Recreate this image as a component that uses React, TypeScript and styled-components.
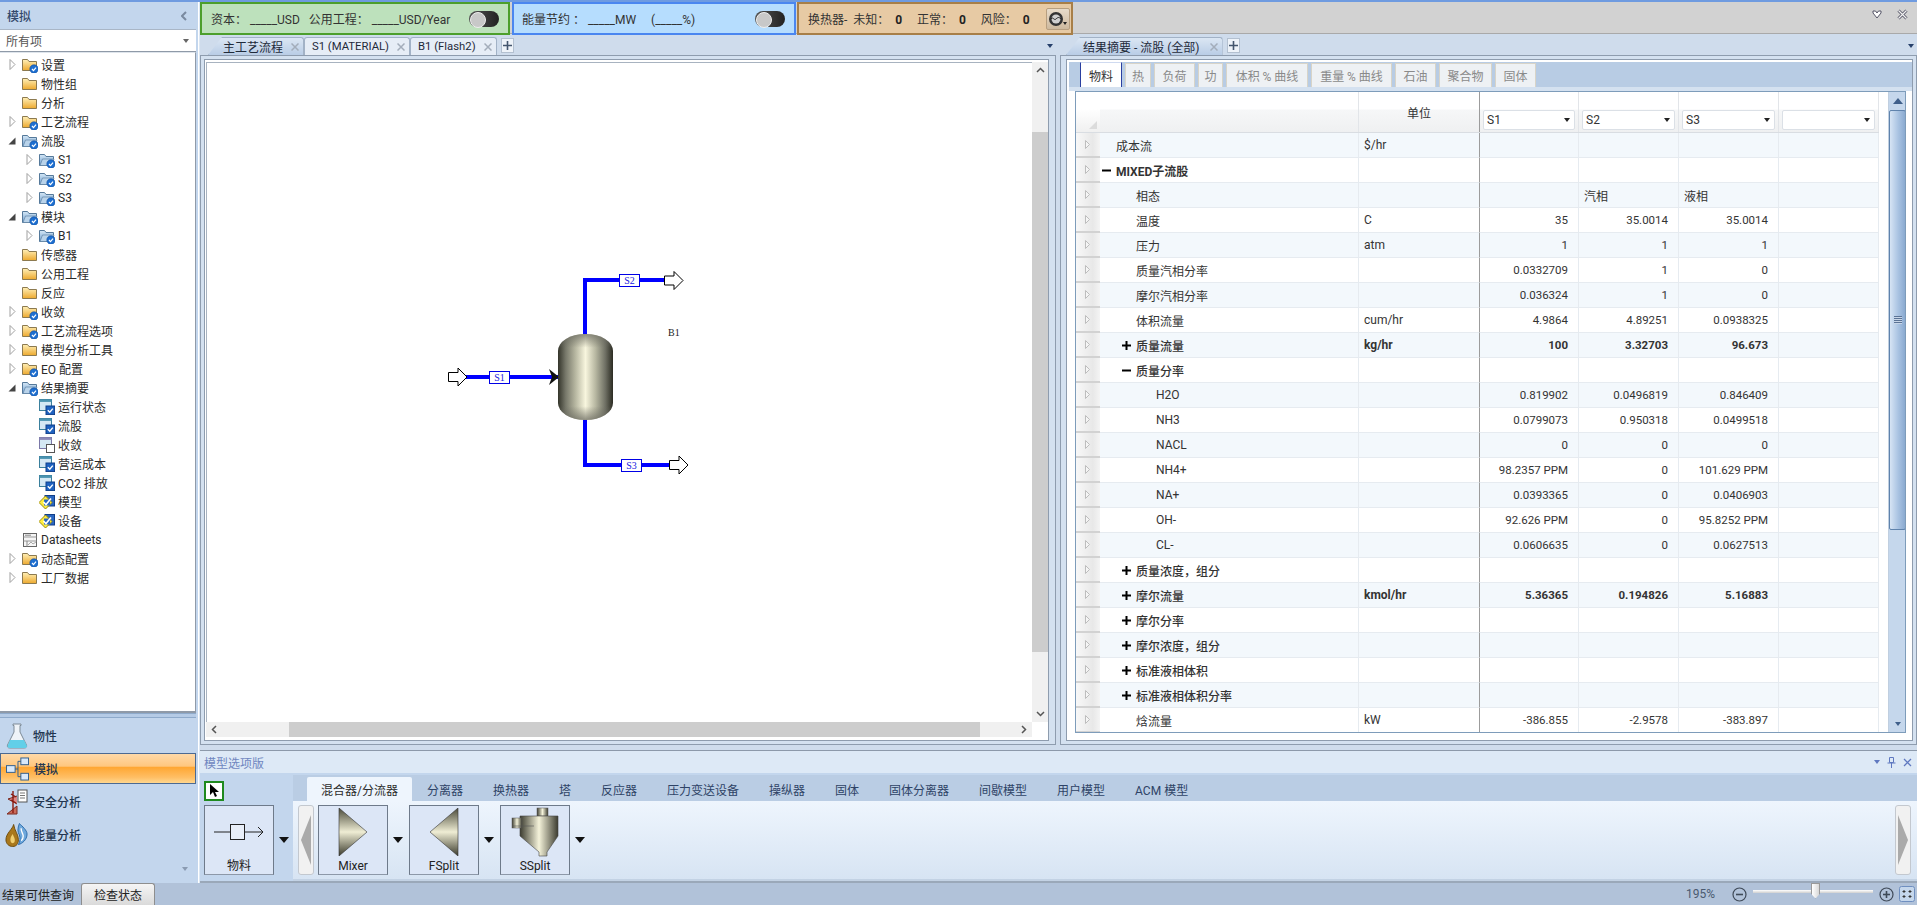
import React from "react";
import styled, { createGlobalStyle } from "styled-components";

const Global = createGlobalStyle`
  html, body { margin: 0; padding: 0; height: 100%; overflow: hidden; }
  body { font-family: Roboto, "Noto Sans CJK SC", "Noto Sans", sans-serif; font-size: 12px; color: #1c1c1c; }
  * { box-sizing: border-box; }
`;

const Page = styled.div`
  width: 1917px; height: 905px; display: flex; flex-direction: column;
  background: #c4d6ec; border-top: 2px solid #6f9be0;
`;
const Body = styled.div`display: flex; flex: 1; min-height: 0;`;

/* ---------- sidebar ---------- */
const Sidebar = styled.div`
  width: 196px; flex: none; display: flex; flex-direction: column; background: #c3d6ed;
`;
const Gutter = styled.div`width: 4px; flex: none; background: linear-gradient(90deg,#c3d6ed 0 2px,#fff 2px 3px,#dde8f4 3px);`;
const SideHead = styled.div`
  height: 27px; display: flex; align-items: center; justify-content: space-between;
  padding: 0 9px 0 7px; font-size: 12px; color: #33496b; font-weight: 500;
`;
const Combo = styled.div`
  height: 23px; background: #fff; border-top: 1px solid #a9b6c6; border-bottom: 1px solid #8f9aa8;
  display: flex; align-items: center; justify-content: space-between; padding: 0 7px 0 6px; color: #555;
`;
const TinyDown = styled.span`
  width: 0; height: 0; border-left: 3px solid transparent; border-right: 3px solid transparent;
  border-top: 4px solid ${p => p.$c || "#666"}; display: inline-block; flex: none;
`;
const Tree = styled.div`
  height: 661px; background: #fff; padding-top: 2px; border-right: 1px solid #8f9aa8;
  border-bottom: 2px solid #8f9aa8; border-top: 1px solid #dfe5ec;
`;
const TreeRow = styled.div`
  height: 19px; display: flex; align-items: center; white-space: nowrap; padding-left: ${p => p.$level * 17 + 6}px; color: #2a2a2a;
`;
const Exp = styled.span`width: 16px; height: 19px; display: inline-flex; align-items: center; justify-content: flex-start; flex: none;`;
const NodeIcon = styled.span`width: 19px; height: 19px; display: inline-flex; align-items: center; flex: none;`;
const NavBand = styled.div`height: 5px; background: #b5cbe6; border-bottom: 1px solid #8eaacb; border-top: 1px solid #8eaacb;`;
const Nav = styled.div`flex: 1; display: flex; flex-direction: column; padding-top: 1px; position: relative;`;
const NavItem = styled.div`
  height: 33px; display: flex; align-items: center; gap: 5px; padding-left: 5px; font-weight: 500; color: #22354f;
  ${p => p.$on ? `height: 31px; margin: 1px 0 1px 0; border: 1px solid #4c6a92;
    background: linear-gradient(180deg,#ffd9a8 0%,#ffc77f 42%,#ffa733 46%,#ffbe64 80%,#ffd78f 100%);` : ""}
`;
const NavIcon = styled.span`width: 23px; height: 26px; display: inline-flex; align-items: center; justify-content: center; flex: none;`;
const NavMore = styled.div`position: absolute; right: 8px; bottom: 12px; line-height: 0;`;

/* ---------- workspace ---------- */
const Workspace = styled.div`flex: 1; min-width: 0; display: flex; flex-direction: column; background: #cfdcec;`;
const Ribbon = styled.div`height: 34px; flex: none; display: flex; background: linear-gradient(180deg,#d2d2d2 0 31px,#a9a9a9 31px 32px,#cfdcec 32px); position: relative;`;
const Badge = styled.div`
  height: 33px; width: ${p => p.$w}px; margin-right: ${p => p.$mr}px; flex: none; display: flex; align-items: center; justify-content: space-between;
  padding: 0 ${p => p.$pr}px 0 ${p => p.$pl}px; background: ${p => p.$bg}; border: 2px solid ${p => p.$bc}; white-space: nowrap; color: #333;
`;
const BadgeText = styled.span`white-space: pre;`;
const Strong = styled.b`font-weight: 700; color: #222;`;
const Toggle = styled.span`
  width: 30px; height: 16px; border-radius: 8px; background: linear-gradient(90deg,#555,#222); display: inline-block; position: relative; flex: none;
  &::after { content: ""; position: absolute; left: 1px; top: 1px; width: 14px; height: 14px; border-radius: 50%; background: #c8c8c8; border: 1px solid #eee; }
`;
const EyeBtn = styled.span`
  width: 24px; height: 22px; background: linear-gradient(180deg,#e8dccb,#cdb99e); border: 1px solid #b79f80; border-radius: 2px;
  display: inline-flex; align-items: center; justify-content: center; flex: none;
`;
const WinBtns = styled.div`position: absolute; right: 9px; top: 7px; display: flex; gap: 15px; align-items: center; line-height: 0;`;

const Docs = styled.div`flex: 1; min-height: 0; display: flex; gap: 4px;`;
const DocPanel = styled.div`width: ${p => p.$w}px; flex: none; display: flex; flex-direction: column; min-height: 0;`;
const TabStrip = styled.div`
  height: 19px; flex: none; display: flex; align-items: flex-end; padding-left: ${p => p.$pl}px; position: relative;
`;
const DocTab = styled.div`
  height: 18px; display: flex; align-items: center; gap: ${p => p.$gap || 8}px; white-space: nowrap; color: #1f2a3a; flex: none;
  padding: 0 4px 0 ${p => p.$pl}px; font-size: ${p => p.$fs || 12}px;
  background: ${p => p.$on ? "linear-gradient(180deg,#dbe6f3,#b9cde6)" : "#e6edf6"};
  border: 1px solid #a2b2c6; border-bottom: 0; border-radius: 3px 3px 0 0;
  clip-path: ${p => p.$slant ? "polygon(14px 0,100% 0,100% 100%,0 100%)" : "none"};
`;
const PlusBtn = styled.span`
  width: 13px; height: 15px; margin: 0 0 2px 4px; background: #eef3f9; border: 1px solid #b3c0d0; display: inline-flex; align-items: center; justify-content: center; flex: none;
`;
const StripArrow = styled.span`position: absolute; right: 3px; top: 8px; line-height: 0;`;
const Outer = styled.div`
  flex: 1; min-height: 0; display: flex; border: 1px solid #8e9cae; padding: ${p => p.$pad}; margin-bottom: 5px; background: #d4e1f0;
`;
const Inner = styled.div`
  flex: 1; min-width: 0; display: flex; flex-direction: column; background: #fff; border: 1px solid #8e9cae; padding: ${p => p.$pad};
`;
const CanvasWrap = styled.div`flex: 1; min-height: 0; display: grid; grid-template-columns: 1fr 16px; grid-template-rows: 1fr 15px;`;
const Canvas = styled.div`background: #fff; overflow: hidden; min-height: 0; border-top: 1px solid #a8b3c0; border-left: 1px solid #a8b3c0;`;
const VScroll = styled.div`display: flex; flex-direction: column; background: #f0f0f0;`;
const ScrollEnd = styled.div`height: 16px; flex: none; display: flex; align-items: center; justify-content: center; color: #555; line-height: 0;`;
const ScrollThumb = styled.div`flex: ${p => p.$f}; background: ${p => p.$on ? "#cdcdcd" : "transparent"};`;
const HScroll = styled.div`display: flex; background: #f0f0f0;`;
const HEnd = styled.div`width: 16px; flex: none; display: flex; align-items: center; justify-content: center; line-height: 0;`;
const HThumb = styled.div`flex: ${p => p.$f}; background: ${p => p.$on ? "#cdcdcd" : "transparent"};`;

/* ---------- results ---------- */
const SubBar = styled.div`
  height: 25px; flex: none; display: flex; gap: 3px; align-items: flex-end; padding-left: 11px; margin: 0 0 0 2px; background: #b8cce4;
`;
const SubTab = styled.div`
  height: ${p => p.$on ? 25 : 24}px; width: ${p => p.$w}px; flex: none; display: flex; align-items: center; justify-content: center;
  background: ${p => p.$on ? "#fff" : "#eef1f4"}; color: ${p => p.$on ? "#333" : "#8a8a8a"};
  border: 1px solid ${p => p.$on ? "#2a3fa0" : "#d8d4c8"}; border-top-color: ${p => p.$on ? "#cfdaf0" : "#d8d4c8"}; border-bottom: 0; white-space: nowrap;
`;
const SubGap = styled.div`height: 4px; flex: none; background: #d4e1f0; margin-left: 2px;`;
const TableBox = styled.div`
  height: 642px; flex: none; margin: 0 6px 0 8px; border: 1px solid #7e9cba; display: flex; background: #fff; overflow: hidden;
`;
const Table = styled.div`width: 803px; flex: none; display: flex; flex-direction: column;`;
const cols = "24px 259px 121px 99px 100px 100px 100px";
const HeadRow = styled.div`
  height: 41px; flex: none; display: grid; grid-template-columns: ${cols};
  background: linear-gradient(180deg,#fff 0 17px,#f6f7f8 18px,#eff0f1 100%); border-bottom: 1px solid #d9dde2;
`;
const Corner = styled.div`display: flex; align-items: flex-end; justify-content: flex-end; padding: 0 3px 3px 0; background: linear-gradient(180deg,#fff 0 17px,#f0f0f0 100%); line-height: 0;`;
const HeadCell = styled.div`border-right: 1px solid #e2e5e9;`;
const UnitHead = styled(HeadCell)`display: flex; align-items: center; justify-content: center; padding-top: 1px; border-right: 1px solid #9c9c9c; color: #333;`;
const ComboCell = styled.div`padding: 18px 3px 0 3px; border-right: 1px solid #e2e5e9;`;
const StreamCombo = styled.div`
  height: 20px; background: #fff; border: 1px solid #dbe0e6; border-radius: 2px; display: flex; align-items: center; justify-content: space-between; padding: 0 4px 0 3px; color: #333;
`;
const ComboArrow = styled(TinyDown)`margin-left: auto;`;
const Row = styled.div`
  height: 25px; flex: none; display: grid; grid-template-columns: ${cols}; background: ${p => p.$alt ? "#f3f8fc" : "#fff"};
  font-weight: ${p => p.$bold ? 700 : 400}; color: #333;
`;
const RowHead = styled.div`
  display: flex; align-items: center; padding-left: 9px; background: linear-gradient(90deg,#f8f8f8,#e8e8e8 70%,#f4f4f4); border-bottom: 2px solid #d2d2d2; line-height: 0;
`;
const Cell = styled.div`
  display: flex; align-items: center; white-space: nowrap; border-bottom: 1px solid #e6ebf0; border-right: 1px solid ${p => p.$div ? "#9c9c9c" : "#e6ebf0"};
  justify-content: ${p => p.$num ? "flex-end" : "flex-start"};
  padding: ${p => p.$num ? "0 10px 0 0" : "0 0 0 " + (p.$pl ?? 5) + "px"};
  font-size: ${p => p.$num ? "11.5px" : "12px"};
`;
const NameCell = styled(Cell)`font-weight: ${p => p.$w};`;
const TreeToggle = styled.span`width: 14px; flex: none; display: inline-flex; line-height: 0;`;
const TableBlank = styled.div`width: 9px; flex: none; background: #fff;`;
const TableScroll = styled.div`width: 18px; flex: none; display: flex; flex-direction: column; background: #c5d7ec; border-left: 1px solid #c0cfe0;`;
const ScrollBtn = styled.div`height: 17px; flex: none; display: flex; align-items: center; justify-content: center; line-height: 0;`;
const ScrollBlue = styled.div`
  height: 420px; flex: none; margin: 1px 0 0 0; border: 1px solid #5f83ad; border-radius: 2px; background: linear-gradient(90deg,#d6e4f4,#a9c3e2 55%,#8aaad0);
  display: flex; align-items: center; justify-content: center;
`;
const Grip = styled.div`width: 8px; height: 8px; background: repeating-linear-gradient(180deg,#5a7396 0 1px,#c8d6e8 1px 2px);`;
const ScrollRest = styled.div`flex: 1;`;

/* ---------- palette ---------- */
const Palette = styled.div`height: 133px; flex: none; display: flex; flex-direction: column; background: #dde9f6; border-top: 1px solid #8c99aa; border-bottom: 2px solid #9aa8b9;`;
const PalHead = styled.div`height: 22px; flex: none; display: flex; align-items: center; justify-content: space-between; padding: 0 5px 0 4px; color: #6f86c0;`;
const PalBtns = styled.div`display: flex; gap: 7px; align-items: center; line-height: 0;`;
const PalBody = styled.div`flex: 1; min-height: 0; display: flex; background: #c3d6ed;`;
const PalLeft = styled.div`width: 93px; flex: none; padding: 8px 0 0 4px; display: flex; flex-direction: column; gap: 4px;`;
const Cursor = styled.div`width: 20px; height: 20px; border: 2px solid #1f8a1f; background: #fff; display: flex; align-items: center; justify-content: center; line-height: 0;`;
const PalRight = styled.div`flex: 1; min-width: 0; display: flex; flex-direction: column; padding-top: 2px;`;
const PalTabs = styled.div`height: 26px; flex: none; display: flex; align-items: flex-end; padding-left: 14px; background: #bacde4; color: #2e4366;`;
const PalTab = styled.div`
  height: 24px; flex: none; display: flex; align-items: center; padding: 0 15px; white-space: nowrap;
  ${p => p.$on ? "background: #eef5fd; padding: 0 14px; color: #2b2b2b; border-radius: 2px 2px 0 0;" : ""}
`;
const PalItems = styled.div`
  flex: 1; min-height: 0; display: flex; align-items: flex-start; padding: 4px 6px 0 5px; justify-content: space-between;
  background: linear-gradient(180deg,#eef5fd,#d7e4f3); border-bottom: 2px solid #c3d2e4;
`;
const PalItemGroup = styled.div`display: flex;`;
const PalScroll = styled.div`
  width: 16px; height: 70px; flex: none; margin-right: ${p => p.$mr ?? 4}px; background: #f1f1f1; border: 1px solid #c3c8cf; border-radius: 3px;
  display: flex; align-items: center; justify-content: center; line-height: 0;
`;
const TileWrap = styled.div`display: flex; align-items: flex-start; width: ${p => p.$w}px; flex: none;`;
const Tile = styled.div`
  width: 70px; height: 70px; flex: none; background: #dce6f6; border: 1px solid #6e7a8a; border-bottom: 1px solid #8d98a8; display: flex; flex-direction: column; align-items: center;
`;
const TileArt = styled.div`height: 52px; width: 100%; flex: none; display: flex; align-items: center; justify-content: center; line-height: 0;`;
const TileLabel = styled.div`color: #222; line-height: 16px;`;
const TileArrow = styled.span`
  width: 0; height: 0; margin: 32px 0 0 5px; border-left: 5px solid transparent; border-right: 5px solid transparent; border-top: 6px solid #111; flex: none;
`;

/* ---------- status ---------- */
const Status = styled.div`height: 22px; flex: none; display: flex; align-items: center; background: #b1c2d9; padding-left: 2px;`;
const StatusText = styled.span`color: #222;`;
const StatusBtn = styled.div`
  width: 74px; height: 22px; margin-left: 7px; display: flex; align-items: center; justify-content: center; background: linear-gradient(180deg,#f5f5f5,#dadada);
  border: 1px solid #8e8e8e; border-bottom: 0; border-radius: 3px 3px 0 0; color: #222;
`;
const Zoom = styled.div`margin-left: auto; display: flex; align-items: center; padding-right: 2px; color: #555; line-height: 0;`;
const ZoomPct = styled.span`font-size: 12px; margin-right: 17px; line-height: 1; color: #4a5a70;`;
const Slider = styled.div`width: 120px; height: 3px; margin: 0 6px; background: linear-gradient(180deg,#fff,#cfcfcf); position: relative; top: -3px;`;
const SliderKnob = styled.span`
  position: absolute; left: 58px; top: -7px; width: 9px; height: 16px; background: linear-gradient(90deg,#fff,#d8d8d8); border: 1px solid #999;
  clip-path: polygon(0 0,100% 0,100% 70%,50% 100%,0 70%);
`;

/* ---------- icons ---------- */
const Check = () => (
  <g>
    <circle cx="12" cy="12" r="4.2" fill="#1e6fd0" stroke="#0f4c9c" strokeWidth=".6" />
    <path d="M10 12l1.5 1.6L14 10.6" fill="none" stroke="#fff" strokeWidth="1.2" />
  </g>
);
const YFolder = ({ check }: { check?: boolean }) => (
  <svg width="16" height="16" viewBox="0 0 16 16">
    <defs><linearGradient id="yf" x1="0" y1="0" x2="0" y2="1"><stop offset="0" stopColor="#fff0b8" /><stop offset="1" stopColor="#eda92e" /></linearGradient></defs>
    <path d="M.5 13.5V2.5h5l1.5 2h7.5v9z" fill="url(#yf)" stroke="#8c7a50" />
    {check && <Check />}
  </svg>
);
const BFolder = () => (
  <svg width="16" height="16" viewBox="0 0 16 16">
    <defs><linearGradient id="bf" x1="0" y1="0" x2="0" y2="1"><stop offset="0" stopColor="#d6e8f6" /><stop offset="1" stopColor="#6f9fd0" /></linearGradient></defs>
    <path d="M.5 13.5V2.5h5l1.5 2h7.5v9z" fill="url(#bf)" stroke="#55799a" />
    <path d="M1 13.5L3.5 7h11.5l-2 6.5z" fill="#b9d3ea" stroke="#55799a" strokeWidth=".6" />
    <Check />
  </svg>
);
const DocIcon = ({ plain }: { plain?: boolean }) => (
  <svg width="16" height="16" viewBox="0 0 16 16">
    <rect x=".5" y=".5" width="12" height="11" fill="#d4e8f4" stroke={plain ? "#7b78a8" : "#3a7f9c"} />
    <rect x=".5" y=".5" width="12" height="2.4" fill={plain ? "#8d8ab8" : "#4a93b0"} />
    {plain
      ? <rect x="7.5" y="7.5" width="8" height="8" fill="#fff" stroke="#555" />
      : <g><rect x="7" y="7" width="8.6" height="8.6" fill="#1e62c0" stroke="#0f3f8a" /><path d="M8.8 11.2l2 2 3-3.6" fill="none" stroke="#fff" strokeWidth="1.4" /></g>}
  </svg>
);
const DiamondIcon = () => (
  <svg width="16" height="16" viewBox="0 0 16 16">
    <rect x="6" y="1.500" width="9.500" height="10.500" fill="#2a66c0" stroke="#123f88" />
    <path d="M6.500 2L13 8.500 6.500 15 0 8.500z" fill="#ffec40" stroke="#9a8a10" />
    <path d="M5 5.500h6v6H5z" fill="#2a66c0" />
    <path d="M4.500 8l2.500 2.500 5-6" fill="none" stroke="#fff" strokeWidth="1.600" />
  </svg>
);
const SheetIcon = () => (
  <svg width="16" height="16" viewBox="0 0 16 16">
    <rect x="1.5" y="1.5" width="13" height="13" fill="#f6f6f6" stroke="#666" />
    <path d="M1.5 5h13M1.5 9h13" stroke="#999" />
    <path d="M5 9v5.5M3 3.2h6" stroke="#888" />
    <path d="M6 13l3-3 2 2 3-2" fill="none" stroke="#aaa" />
  </svg>
);
const ClosedTri = () => (
  <svg width="7" height="11" viewBox="0 0 7 11" style={{ marginLeft: 3 }}><path d="M1 .5v10l5-5z" fill="#fff" stroke="#a0a0a0" /></svg>
);
const OpenTri = () => (
  <svg width="8" height="8" viewBox="0 0 8 8" style={{ marginLeft: 2 }}><path d="M7.5 .5v7h-7z" fill="#444" /></svg>
);
const RowTri = () => (
  <svg width="5" height="9" viewBox="0 0 5 9"><path d="M.5.5v8l4-4z" fill="#f5f5f5" stroke="#bdbdbd" /></svg>
);
const TabX = () => <svg width="8" height="8" viewBox="0 0 8 8"><path d="M.5.5l7 7M7.500.5l-7 7" stroke="#a3adba" strokeWidth="1.500" /></svg>;
const Plus = () => <svg width="9" height="9" viewBox="0 0 9 9"><path d="M4.5 0v9M0 4.5h9" stroke="#000" strokeWidth="2" /></svg>;
const Minus = () => <svg width="9" height="9" viewBox="0 0 9 9"><path d="M0 4.5h9" stroke="#000" strokeWidth="2" /></svg>;
const Flask = () => (
  <svg width="22" height="26" viewBox="0 0 22 26">
    <path d="M7 1h8v1.5h-1V9l6.5 13c.6 1.6-.4 3-2 3H3.5c-1.600 0-2.600-1.400-2-3L8 9V2.500H7z" fill="#eef3f8" stroke="#7d8a96" />
    <path d="M4 17h14l3 6c0 1-1 2-2 2H3.500c-1 0-2-1-2-2z" fill="#62cfe8" />
  </svg>
);
const FlowIcon = () => (
  <svg width="24" height="24" viewBox="0 0 24 24" fill="#d8e8fa" stroke="#2f5d8e">
    <rect x=".5" y="8.500" width="9" height="7" />
    <rect x="15.500" y=".5" width="8" height="7" />
    <rect x="15.500" y="16.500" width="8" height="7" />
    <path d="M9.500 12h3M12.500 4v16M12.500 4h3M12.500 20h3" fill="none" />
  </svg>
);
const SafetyIcon = () => (
  <svg width="22" height="26" viewBox="0 0 22 26">
    <rect x="12" y="1" width="9" height="12" fill="#fff" stroke="#555" />
    <path d="M14 4h5M14 6.500h5M14 9h5" stroke="#777" />
    <path d="M1 25L11 17V25z" fill="#c96a5a" stroke="#7a2a20" />
    <path d="M11 15l-9-5 9-3" fill="#d88" stroke="#7a2a20" />
    <path d="M7 2v22M5 5l5 3M5 11l5 3" stroke="#8a1a10" strokeWidth="1.400" fill="none" />
  </svg>
);
const EnergyIcon = () => (
  <svg width="24" height="26" viewBox="0 0 24 26">
    <path d="M9 2C8 7 1 11 1 18c0 4 3 7 7 7s6-3 6-7C14 12 10 9 9 2z" fill="#a9781c" stroke="#6d4a0c" />
    <path d="M8 12c-2 3-3 5-2 8 1 2 3 2 4 0 1-3-1-5-2-8z" fill="#f0cf70" />
    <path d="M15 1c-2 5-2 9 0 12 1 3 1 7-1 10 4-1 9-5 9-11C23 8 18 4 15 1z" fill="#6fa8dc" stroke="#2a6aa8" />
    <path d="M17 6c-1 3 2 5 2 8s-1 4-2 5" fill="none" stroke="#fff" strokeWidth="1.400" />
  </svg>
);

const Arrow = ({ x, y }: { x: number; y: number }) => (
  <path d={`M${x} ${y - 4.500}h9.500v-4.500l9 9-9 9v-4.500h-9.500z`} fill="#fff" stroke="#000" strokeWidth="1" />
);
const StreamLabel = ({ x, y, t }: { x: number; y: number; t: string }) => (
  <g>
    <rect x={x} y={y} width="20" height="12" fill="#fff" stroke="#0000e6" />
    <text x={x + 10} y={y + 9.500} textAnchor="middle" fontFamily="'Liberation Serif',serif" fontSize="10" fill="#2020e0">{t}</text>
  </g>
);
const Flowsheet = () => (
  <svg width="827" height="660" viewBox="207 63 827 660">
    <defs>
      <linearGradient id="ves" x1="0" y1="0" x2="1" y2="0">
        <stop offset="0" stopColor="#33342a" /><stop offset=".14" stopColor="#77786a" /><stop offset=".32" stopColor="#b8b8a2" />
        <stop offset=".5" stopColor="#f8f6de" /><stop offset=".68" stopColor="#b8b8a2" /><stop offset=".86" stopColor="#6f7064" /><stop offset="1" stopColor="#2b2b22" />
      </linearGradient>
      <linearGradient id="capshade" x1="0" y1="0" x2="0" y2="1">
        <stop offset="0" stopColor="#6a6a60" stopOpacity=".75" /><stop offset=".16" stopColor="#6a6a60" stopOpacity="0" />
        <stop offset=".84" stopColor="#6a6a60" stopOpacity="0" /><stop offset="1" stopColor="#6a6a60" stopOpacity=".75" />
      </linearGradient>
    </defs>
    <g fill="none" stroke="#0000ff" strokeWidth="4">
      <path d="M466 377H558" />
      <path d="M585 336V280H665" />
      <path d="M585 418V465H670" />
    </g>
    <path d="M549 369l10 8-10 8 3-8z" fill="#111" />
    <rect x="558" y="334" width="55" height="86" rx="27" ry="17" fill="url(#ves)" />
    <rect x="558" y="334" width="55" height="86" rx="27" ry="17" fill="url(#capshade)" />
    <Arrow x={448.500} y={377} />
    <Arrow x={664.500} y={280.500} />
    <Arrow x={669.500} y={465} />
    <StreamLabel x={489.500} y={371.500} t="S1" />
    <StreamLabel x={619.500} y={274.500} t="S2" />
    <StreamLabel x={621.500} y={459.500} t="S3" />
    <text x="668" y="336" fontFamily="'Liberation Serif',serif" fontSize="10" fill="#222">B1</text>
  </svg>
);

const MaterialArt = () => (
  <svg width="50" height="22" viewBox="0 0 50 22" fill="none" stroke="#222">
    <path d="M0 11h16M31 11h18M44 6l5 5-5 5" />
    <rect x="16.500" y="3.500" width="14" height="15" fill="#e8eef8" />
  </svg>
);
const grad = (id: string) => (
  <defs><linearGradient id={id} x1="0" y1="0" x2="0" y2="1"><stop offset="0" stopColor="#4a4a3a" /><stop offset=".5" stopColor="#efedd4" /><stop offset="1" stopColor="#3a3a2c" /></linearGradient></defs>
);
const MixerArt = () => (
  <svg width="30" height="48" viewBox="0 0 30 48">{grad("mx")}<path d="M1 0v48l28-24z" fill="url(#mx)" stroke="#333" strokeWidth=".6" /></svg>
);
const FSplitArt = () => (
  <svg width="30" height="48" viewBox="0 0 30 48">{grad("fs")}<path d="M29 0v48L1 24z" fill="url(#fs)" stroke="#333" strokeWidth=".6" /></svg>
);
const SSplitArt = () => (
  <svg width="48" height="50" viewBox="0 0 48 50">
    <defs><linearGradient id="ss" x1="0" y1="0" x2="1" y2="0"><stop offset="0" stopColor="#3c3c30" /><stop offset=".5" stopColor="#f5f3da" /><stop offset="1" stopColor="#3c3c30" /></linearGradient></defs>
    <rect x="26" y="1" width="11" height="8" fill="url(#ss)" stroke="#555" strokeWidth=".5" />
    <path d="M9 9h38v20L36 45v4H28v-4L9 29z" fill="url(#ss)" stroke="#444" strokeWidth=".6" />
    <rect x="1" y="11" width="10" height="10" fill="url(#ss)" stroke="#555" strokeWidth=".5" />
    <path d="M1 19h22" stroke="#555" strokeWidth=".6" />
  </svg>
);

/* ---------- data ---------- */
type TN = { t: string; l: number; e?: "c" | "o"; i: string };
const tree: TN[] = [
  { t: "设置", l: 0, e: "c", i: "yc" }, { t: "物性组", l: 0, i: "y" }, { t: "分析", l: 0, i: "y" },
  { t: "工艺流程", l: 0, e: "c", i: "yc" }, { t: "流股", l: 0, e: "o", i: "b" },
  { t: "S1", l: 1, e: "c", i: "b" }, { t: "S2", l: 1, e: "c", i: "b" }, { t: "S3", l: 1, e: "c", i: "b" },
  { t: "模块", l: 0, e: "o", i: "b" }, { t: "B1", l: 1, e: "c", i: "b" },
  { t: "传感器", l: 0, i: "y" }, { t: "公用工程", l: 0, i: "y" }, { t: "反应", l: 0, i: "y" },
  { t: "收敛", l: 0, e: "c", i: "yc" }, { t: "工艺流程选项", l: 0, e: "c", i: "yc" }, { t: "模型分析工具", l: 0, e: "c", i: "y" },
  { t: "EO 配置", l: 0, e: "c", i: "yc" }, { t: "结果摘要", l: 0, e: "o", i: "b" },
  { t: "运行状态", l: 1, i: "d" }, { t: "流股", l: 1, i: "d" }, { t: "收敛", l: 1, i: "p" }, { t: "营运成本", l: 1, i: "d" },
  { t: "CO2 排放", l: 1, i: "d" }, { t: "模型", l: 1, i: "m" }, { t: "设备", l: 1, i: "m" },
  { t: "Datasheets", l: 0, i: "s" }, { t: "动态配置", l: 0, e: "c", i: "yc" }, { t: "工厂数据", l: 0, e: "c", i: "y" },
];
const nodeIcon = (i: string) => {
  if (i === "yc") return <YFolder check />;
  if (i === "y") return <YFolder />;
  if (i === "b") return <BFolder />;
  if (i === "d") return <DocIcon />;
  if (i === "p") return <DocIcon plain />;
  if (i === "m") return <DiamondIcon />;
  return <SheetIcon />;
};

type R = { n: string; l: number; u?: string; v?: string[]; tog?: "+" | "-"; b?: boolean; tx?: boolean };
const rows: R[] = [
  { n: "成本流", l: 0, u: "$/hr" },
  { n: "MIXED子流股", l: 0, tog: "-", b: true },
  { n: "相态", l: 1, v: ["", "汽相", "液相"], tx: true },
  { n: "温度", l: 1, u: "C", v: ["35", "35.0014", "35.0014"] },
  { n: "压力", l: 1, u: "atm", v: ["1", "1", "1"] },
  { n: "质量汽相分率", l: 1, v: ["0.0332709", "1", "0"] },
  { n: "摩尔汽相分率", l: 1, v: ["0.036324", "1", "0"] },
  { n: "体积流量", l: 1, u: "cum/hr", v: ["4.9864", "4.89251", "0.0938325"] },
  { n: "质量流量", l: 1, tog: "+", u: "kg/hr", v: ["100", "3.32703", "96.673"], b: true },
  { n: "质量分率", l: 1, tog: "-" },
  { n: "H2O", l: 2, v: ["0.819902", "0.0496819", "0.846409"] },
  { n: "NH3", l: 2, v: ["0.0799073", "0.950318", "0.0499518"] },
  { n: "NACL", l: 2, v: ["0", "0", "0"] },
  { n: "NH4+", l: 2, v: ["98.2357 PPM", "0", "101.629 PPM"] },
  { n: "NA+", l: 2, v: ["0.0393365", "0", "0.0406903"] },
  { n: "OH-", l: 2, v: ["92.626 PPM", "0", "95.8252 PPM"] },
  { n: "CL-", l: 2, v: ["0.0606635", "0", "0.0627513"] },
  { n: "质量浓度，组分", l: 1, tog: "+" },
  { n: "摩尔流量", l: 1, tog: "+", u: "kmol/hr", v: ["5.36365", "0.194826", "5.16883"], b: true },
  { n: "摩尔分率", l: 1, tog: "+" },
  { n: "摩尔浓度，组分", l: 1, tog: "+" },
  { n: "标准液相体积", l: 1, tog: "+" },
  { n: "标准液相体积分率", l: 1, tog: "+" },
  { n: "焓流量", l: 1, u: "kW", v: ["-386.855", "-2.9578", "-383.897"] },
];
const subTabs: [string, number][] = [["物料", 42], ["热", 26], ["负荷", 41], ["功", 25], ["体积 % 曲线", 82], ["重量 % 曲线", 81], ["石油", 41], ["聚合物", 53], ["固体", 41]];
const palTabs = ["混合器/分流器", "分离器", "换热器", "塔", "反应器", "压力变送设备", "操纵器", "固体", "固体分离器", "间歇模型", "用户模型", "ACM 模型"];

const ChevL = () => <svg width="6" height="10" viewBox="0 0 6 10"><path d="M5 1L1 5l4 4" fill="none" stroke="#7a8aa0" strokeWidth="2" /></svg>;
const PlusMark = () => <svg width="9" height="9" viewBox="0 0 9 9"><path d="M4.500 0v9M0 4.500h9" stroke="#44566e" strokeWidth="1.600" /></svg>;
const DarkDown = () => <TinyDown $c="#27406b" />;
const TriUp = () => <svg width="10" height="6" viewBox="0 0 10 6"><path d="M0 6l5-6 5 6z" fill="#3f5f8a" /></svg>;

const Circle = ({ plus }: { plus?: boolean }) => (
  <svg width="15" height="15" viewBox="0 0 15 15" fill="none" stroke="#3f4a58">
    <circle cx="7.500" cy="7.500" r="6.500" strokeWidth="1.200" />
    <path d="M4 7.500h7" strokeWidth="1.600" />
    {plus && <path d="M7.500 4v7" strokeWidth="1.600" />}
  </svg>
);

export default function App() {
  return (
    <Page>
      <Global />
      <Body>
        <Sidebar>
          <SideHead>模拟<ChevL /></SideHead>
          <Combo>所有项<TinyDown /></Combo>
          <Tree>
            {tree.map((n, i) => (
              <TreeRow key={i} $level={n.l}>
                <Exp>{n.e === "c" ? <ClosedTri /> : n.e === "o" ? <OpenTri /> : null}</Exp>
                <NodeIcon>{nodeIcon(n.i)}</NodeIcon>
                {n.t}
              </TreeRow>
            ))}
          </Tree>
          <NavBand />
          <Nav>
            <NavItem><NavIcon><Flask /></NavIcon>物性</NavItem>
            <NavItem $on><NavIcon><FlowIcon /></NavIcon>模拟</NavItem>
            <NavItem><NavIcon><SafetyIcon /></NavIcon>安全分析</NavItem>
            <NavItem><NavIcon><EnergyIcon /></NavIcon>能量分析</NavItem>
            <NavMore><TinyDown $c="#8a9bb2" /></NavMore>
          </Nav>
        </Sidebar>
        <Gutter />
        <Workspace>
          <Ribbon>
            <Badge $w={310} $mr={2} $bg="#bde1bc" $bc="#4c9f2c" $pl={9} $pr={9}>
              <BadgeText>资本： _____USD   公用工程： _____USD/Year</BadgeText><Toggle />
            </Badge>
            <Badge $w={284} $mr={1} $bg="#b6ddfe" $bc="#4a86f0" $pl={8} $pr={9}>
              <BadgeText>能量节约 ： _____MW     (_____%)</BadgeText><Toggle />
            </Badge>
            <Badge $w={276} $mr={0} $bg="#e7caa4" $bc="#a87f48" $pl={9} $pr={1}>
              <BadgeText>换热器-  未知：  <Strong>0</Strong>     正常：  <Strong>0</Strong>     风险：  <Strong>0</Strong></BadgeText>
              <EyeBtn>
                <svg width="20" height="16" viewBox="0 0 20 16">
                  <circle cx="8" cy="8" r="7" fill="#333" /><circle cx="8" cy="8" r="4.500" fill="#cfcfcf" /><path d="M3 8c2-3 3 2 5 0s3-2 5 0" fill="none" stroke="#222" />
                  <path d="M15 11h4l-2 3z" fill="#222" />
                </svg>
              </EyeBtn>
            </Badge>
            <WinBtns>
              <svg width="10" height="9" viewBox="0 0 10 9"><path d="M1 1h2.500L5 3l1.500-2H9v2L5 8 1 3z" fill="#fff" stroke="#556" /></svg>
              <svg width="11" height="11" viewBox="0 0 11 11" fill="none">
                <path d="M1.500 1.500l8 8M9.500 1.500l-8 8" stroke="#556" strokeWidth="3" />
                <path d="M1.500 1.500l8 8M9.500 1.500l-8 8" stroke="#f2f2f2" strokeWidth="1.200" />
              </svg>
            </WinBtns>
          </Ribbon>
          <Docs>
            <DocPanel $w={856}>
              <TabStrip $pl={8}>
                <DocTab $on $slant $pl={14}>主工艺流程<TabX /></DocTab>
                <DocTab $pl={7} $fs={11.3}>S1 (MATERIAL)<TabX /></DocTab>
                <DocTab $pl={7} $fs={11.3}>B1 (Flash2)<TabX /></DocTab>
                <PlusBtn><PlusMark /></PlusBtn>
                <StripArrow><DarkDown /></StripArrow>
              </TabStrip>
              <Outer $pad="3px 6px 3px 3px">
                <Inner $pad="2px 0 3px 1px">
                  <CanvasWrap>
                    <Canvas><Flowsheet /></Canvas>
                    <VScroll>
                      <ScrollEnd><svg width="9" height="6" viewBox="0 0 9 6"><path d="M1 5l3.500-3.500L8 5" fill="none" stroke="#555" strokeWidth="1.500" /></svg></ScrollEnd>
                      <ScrollThumb $f={54} />
                      <ScrollThumb $f={518} $on />
                      <ScrollThumb $f={54} />
                      <ScrollEnd><svg width="9" height="6" viewBox="0 0 9 6"><path d="M1 1l3.500 3.500L8 1" fill="none" stroke="#555" strokeWidth="1.500" /></svg></ScrollEnd>
                    </VScroll>
                    <HScroll>
                      <HEnd><svg width="6" height="9" viewBox="0 0 6 9"><path d="M5 1L1.500 4.500 5 8" fill="none" stroke="#555" strokeWidth="1.500" /></svg></HEnd>
                      <HThumb $f={67} />
                      <HThumb $f={692} $on />
                      <HThumb $f={36} />
                      <HEnd><svg width="6" height="9" viewBox="0 0 6 9"><path d="M1 1l3.500 3.500L1 8" fill="none" stroke="#555" strokeWidth="1.500" /></svg></HEnd>
                    </HScroll>
                    <div />
                  </CanvasWrap>
                </Inner>
              </Outer>
            </DocPanel>
            <DocPanel $w={857}>
              <TabStrip $pl={6}>
                <DocTab $on $slant $pl={16} $gap={10}>结果摘要 - 流股 (全部)<TabX /></DocTab>
                <PlusBtn><PlusMark /></PlusBtn>
                <StripArrow><DarkDown /></StripArrow>
              </TabStrip>
              <Outer $pad="3px 3px 3px 5px">
                <Inner $pad="2px 0 0 0">
                  <SubBar>
                    {subTabs.map(([t, w], i) => <SubTab key={t} $w={w} $on={i === 0}>{t}</SubTab>)}
                  </SubBar>
                  <SubGap />
                  <TableBox>
                    <Table>
                      <HeadRow>
                        <Corner><svg width="8" height="8" viewBox="0 0 8 8"><path d="M8 0v8H0z" fill="#dcdcdc" /></svg></Corner>
                        <HeadCell />
                        <UnitHead>单位</UnitHead>
                        {["S1", "S2", "S3", ""].map((s, i) => (
                          <ComboCell key={i}><StreamCombo>{s}<ComboArrow $c="#222" /></StreamCombo></ComboCell>
                        ))}
                      </HeadRow>
                      {rows.map((r, i) => {
                        const v = r.v ?? ["", "", ""];
                        return (
                          <Row key={i} $alt={i % 2 === 0} $bold={r.b}>
                            <RowHead><RowTri /></RowHead>
                            <NameCell $pl={r.l * 20 + 16 - (r.tog ? 14 : 0)} $w={r.b && r.l === 0 ? 700 : r.tog ? 500 : 400}>
                              {r.tog && <TreeToggle>{r.tog === "+" ? <Plus /> : <Minus />}</TreeToggle>}
                              {r.n}
                            </NameCell>
                            <Cell $div>{r.u}</Cell>
                            {v.map((x, j) => <Cell key={j} $num={!r.tx}>{x}</Cell>)}
                            <Cell />
                          </Row>
                        );
                      })}
                    </Table>
                    <TableBlank />
                    <TableScroll>
                      <ScrollBtn><TriUp /></ScrollBtn>
                      <ScrollBlue><Grip /></ScrollBlue>
                      <ScrollRest />
                      <ScrollBtn><TinyDown $c="#3f5f8a" /></ScrollBtn>
                    </TableScroll>
                  </TableBox>
                </Inner>
              </Outer>
            </DocPanel>
          </Docs>
          <Palette>
            <PalHead>
              模型选项版
              <PalBtns>
                <TinyDown $c="#5f78c0" />
                <svg width="9" height="11" viewBox="0 0 9 11" fill="none" stroke="#5f78c0"><path d="M2.500.5h4v5h-4zM.5 6h8M4.500 6v5" /></svg>
                <svg width="9" height="9" viewBox="0 0 9 9" fill="none" stroke="#5f78c0" strokeWidth="1.300"><path d="M1 1l7 7M8 1L1 8" /></svg>
              </PalBtns>
            </PalHead>
            <PalBody>
              <PalLeft>
                <Cursor><svg width="11" height="14" viewBox="0 0 11 14"><path d="M1 0v11l3-3 2 5 2-1-2-4h4z" fill="#000" /></svg></Cursor>
                <TileWrap $w={89}>
                  <Tile>
                    <TileArt><MaterialArt /></TileArt>
                    <TileLabel>物料</TileLabel>
                  </Tile>
                  <TileArrow />
                </TileWrap>
              </PalLeft>
              <PalRight>
                <PalTabs>
                  {palTabs.map((t, i) => <PalTab key={t} $on={i === 0}>{t}</PalTab>)}
                </PalTabs>
                <PalItems>
                  <PalItemGroup>
                    <PalScroll><svg width="12" height="50" viewBox="0 0 12 50"><path d="M11 0v50L1 25z" fill="#aaa" /></svg></PalScroll>
                    <TileWrap $w={91}><Tile><TileArt><MixerArt /></TileArt><TileLabel>Mixer</TileLabel></Tile><TileArrow /></TileWrap>
                    <TileWrap $w={91}><Tile><TileArt><FSplitArt /></TileArt><TileLabel>FSplit</TileLabel></Tile><TileArrow /></TileWrap>
                    <TileWrap $w={91}><Tile><TileArt><SSplitArt /></TileArt><TileLabel>SSplit</TileLabel></Tile><TileArrow /></TileWrap>
                  </PalItemGroup>
                  <PalScroll $mr={0}><svg width="12" height="50" viewBox="0 0 12 50"><path d="M1 0v50l10-25z" fill="#aaa" /></svg></PalScroll>
                </PalItems>
              </PalRight>
            </PalBody>
          </Palette>
        </Workspace>
      </Body>
      <Status>
        <StatusText>结果可供查询</StatusText>
        <StatusBtn>检查状态</StatusBtn>
        <Zoom>
          <ZoomPct>195%</ZoomPct>
          <Circle />
          <Slider><SliderKnob /></Slider>
          <Circle plus />
          <svg width="16" height="16" viewBox="0 0 16 16" style={{ marginLeft: 5 }}>
            <rect x=".5" y=".5" width="15" height="15" rx="2" fill="#c5d7ec" stroke="#6f8fc0" />
            <path d="M5 4v3M3.500 5.500h3M11 4v3M9.500 5.500h3M5 9v3M3.500 10.500h3M11 9v3M9.500 10.500h3" stroke="#333" />
          </svg>
        </Zoom>
      </Status>
    </Page>
  );
}
